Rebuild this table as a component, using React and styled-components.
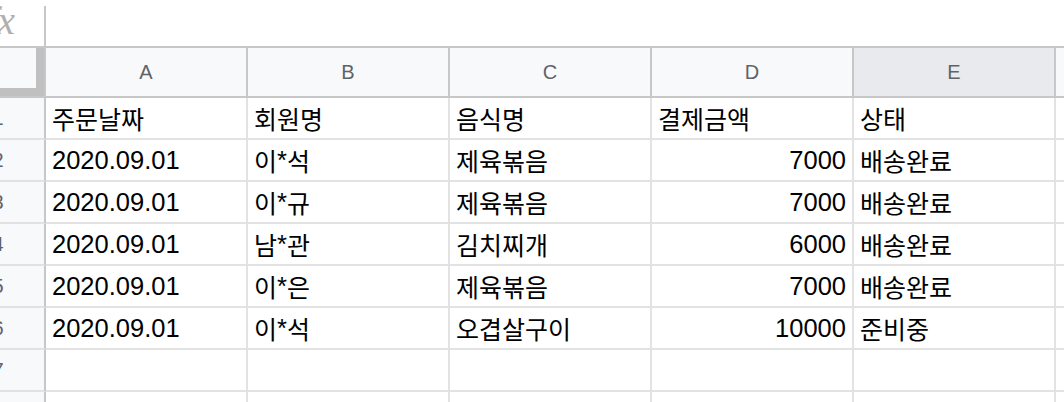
import React from "react";
import styled, { createGlobalStyle } from "styled-components";

const Global = createGlobalStyle`
  html, body { margin: 0; padding: 0; background: #fff; overflow: hidden; }
  body { font-family: "Liberation Sans", Arial, "Noto Sans CJK KR", sans-serif; }
`;

const Viewport = styled.div`
  width: 1064px;
  height: 402px;
  overflow: hidden;
  background: #fff;
`;

const Sheet = styled.div`
  margin-left: -48px;
  width: 1160px;
`;

const FormulaBar = styled.div`
  height: 46px;
  display: flex;
  align-items: stretch;
  border-bottom: 2px solid #c7c7c7;
`;

const FxLabel = styled.div`
  width: 92px;
  display: flex;
  align-items: center;
  justify-content: flex-end;
  padding: 0 29px 6px 0;
  box-sizing: border-box;
  font-family: "Liberation Serif", "DejaVu Serif", serif;
  font-style: italic;
  font-size: 40px;
  color: #b0b0b0;
`;

const FxDivider = styled.div`
  width: 2px;
  margin-top: 6px;
  background: #c7c7c7;
`;

const Grid = styled.div`
  display: grid;
  grid-template-columns: 94px repeat(5, 202px) 202px;
  grid-auto-rows: 42px;
  grid-template-rows: 50px;
`;

const Corner = styled.div`
  background: #f8f9fa;
  border-right: 2px solid #c7c7c7;
  border-bottom: 2px solid #c7c7c7;
  box-shadow: inset -8px -8px 0 #c0c0c0;
`;

const ColHeader = styled.div`
  background: ${(p) => (p.$selected ? "#e8eaed" : "#f8f9fa")};
  border-right: 2px solid #c7c7c7;
  border-bottom: 2px solid #c7c7c7;
  display: flex;
  align-items: center;
  justify-content: center;
  font-family: "Liberation Sans", Arial, sans-serif;
  font-size: 20px;
  color: #5f6368;
`;

const RowHeader = styled.div`
  background: #f8f9fa;
  border-right: 2px solid #c7c7c7;
  border-bottom: 2px solid #e2e2e2;
  display: flex;
  align-items: center;
  justify-content: center;
  font-family: "Liberation Sans", Arial, sans-serif;
  font-size: 20px;
  color: #5f6368;
`;

const Cell = styled.div`
  border-right: 2px solid #e2e2e2;
  border-bottom: 2px solid #e2e2e2;
  display: flex;
  align-items: flex-end;
  justify-content: ${(p) => (p.$num ? "flex-end" : "flex-start")};
  padding: 0 6px 5px 6px;
  box-sizing: border-box;
  font-size: 25.5px;
  line-height: 30px;
  color: #000;
  white-space: nowrap;
  overflow: hidden;
`;

const Hangul = styled.span`
  font-family: "Noto Sans CJK KR", sans-serif;
  font-size: 25px;
`;

const splitText = (text) =>
  String(text)
    .split(/([\uAC00-\uD7A3]+)/)
    .filter(Boolean)
    .map((part, i) =>
      /[\uAC00-\uD7A3]/.test(part) ? <Hangul key={i}>{part}</Hangul> : <React.Fragment key={i}>{part}</React.Fragment>
    );

const cols = ["A", "B", "C", "D", "E", "F"];

const rows = [
  ["주문날짜", "회원명", "음식명", "결제금액", "상태"],
  ["2020.09.01", "이*석", "제육볶음", 7000, "배송완료"],
  ["2020.09.01", "이*규", "제육볶음", 7000, "배송완료"],
  ["2020.09.01", "남*관", "김치찌개", 6000, "배송완료"],
  ["2020.09.01", "이*은", "제육볶음", 7000, "배송완료"],
  ["2020.09.01", "이*석", "오겹살구이", 10000, "준비중"],
  ["", "", "", "", ""],
  ["", "", "", "", ""],
];

export default function App() {
  return (
    <Viewport>
      <Global />
      <Sheet>
        <FormulaBar>
          <FxLabel>fx</FxLabel>
          <FxDivider />
        </FormulaBar>
        <Grid>
          <Corner />
          {cols.map((c) => (
            <ColHeader key={c} $selected={c === "E"}>
              {c}
            </ColHeader>
          ))}
          {rows.map((r, ri) => (
            <React.Fragment key={ri}>
              <RowHeader>{ri + 1}</RowHeader>
              {r.map((v, ci) => (
                <Cell key={ci} $num={typeof v === "number"}>
                  {splitText(v)}
                </Cell>
              ))}
              <Cell />
            </React.Fragment>
          ))}
        </Grid>
      </Sheet>
    </Viewport>
  );
}
